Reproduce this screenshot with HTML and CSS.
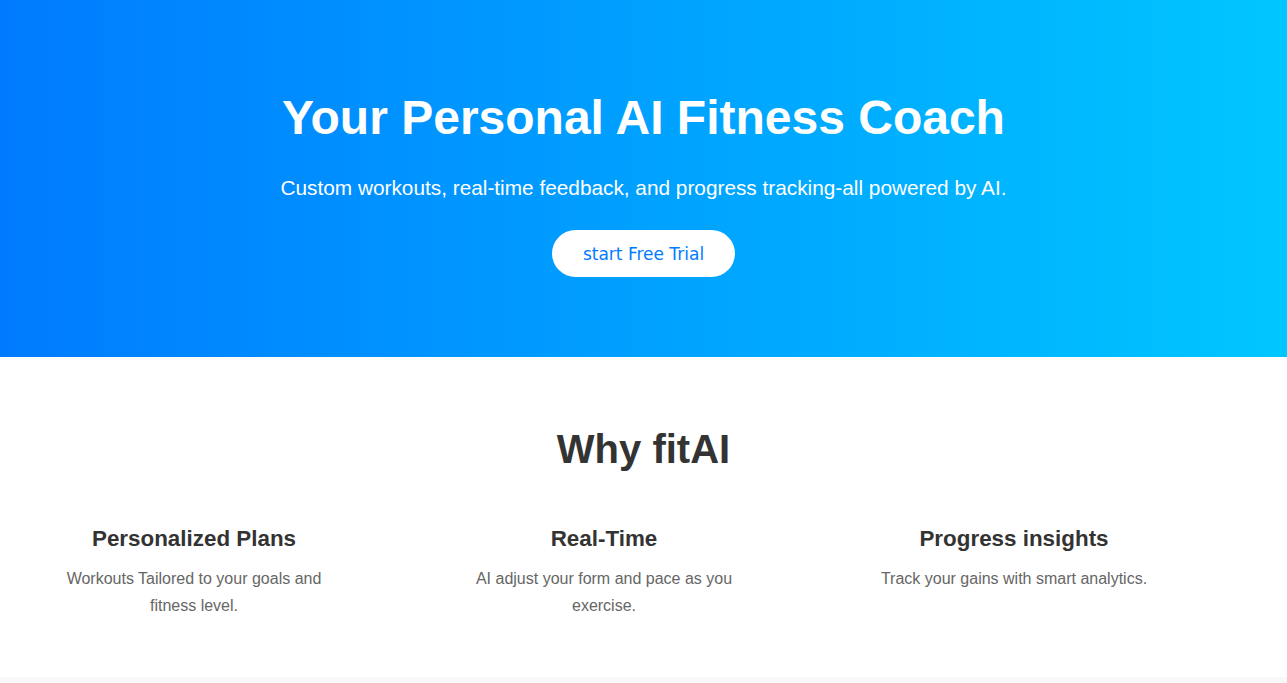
FILE: index.html
```html
<!DOCTYPE html>
<html lang="en">
<head>
<meta charset="utf-8">
<title>fitAI</title>
<link rel="stylesheet" href="styles.css">
</head>
<body>
<header class="hero">
  <h1 class="hero-title">Your Personal AI Fitness Coach</h1>
  <p class="hero-sub">Custom workouts, real-time feedback, and progress tracking-all powered by AI.</p>
  <button class="hero-btn">start Free Trial</button>
</header>
<section class="features">
  <h2 class="features-title">Why fitAI</h2>
  <div class="feature-list">
    <div class="feature">
      <h3>Personalized Plans</h3>
      <p>Workouts Tailored to your goals and fitness level.</p>
    </div>
    <div class="feature">
      <h3>Real-Time</h3>
      <p>AI adjust your form and pace as you exercise.</p>
    </div>
    <div class="feature">
      <h3>Progress insights</h3>
      <p>Track your gains with smart analytics.</p>
    </div>
  </div>
</section>
<section class="next"></section>
</body>
</html>
```

FILE: styles.css
```css
* { box-sizing: border-box; }
html, body { margin: 0; padding: 0; }
body {
  font-family: "Liberation Sans", Arial, sans-serif;
  color: #333;
  background: #fff;
}
.hero {
  height: 357px;
  background: linear-gradient(to right, #007bff, #00c6ff);
  color: #fff;
  text-align: center;
  padding-top: 90px;
}
.hero-title {
  margin: 0;
  font-size: 48px;
  line-height: 56px;
  font-weight: 700;
}
.hero-sub {
  margin: 30px 0 0;
  font-size: 20.8px;
  line-height: 24px;
}
.hero-btn {
  margin-top: 30px;
  width: 183px;
  height: 47px;
  border: none;
  border-radius: 24px;
  background: #fff;
  color: #007bff;
  font-family: "DejaVu Sans", Verdana, sans-serif;
  font-size: 17px;
  cursor: pointer;
}
.features {
  height: 320px;
  padding-top: 66px;
  text-align: center;
}
.features-title {
  margin: 0;
  font-size: 40px;
  line-height: 52px;
  font-weight: 700;
  color: #333;
}
.feature-list {
  display: flex;
  gap: 110px;
  padding-left: 44px;
  margin-top: 50px;
}
.feature {
  width: 300px;
  padding: 0 10px;
}
.feature h3 {
  margin: 0;
  font-size: 22.4px;
  line-height: 28px;
  font-weight: 700;
  color: #333;
}
.feature p {
  margin: 12px 0 0;
  font-size: 16px;
  line-height: 27px;
  color: #666;
}
.next {
  height: 40px;
  background: #f8f8f8;
}
```
